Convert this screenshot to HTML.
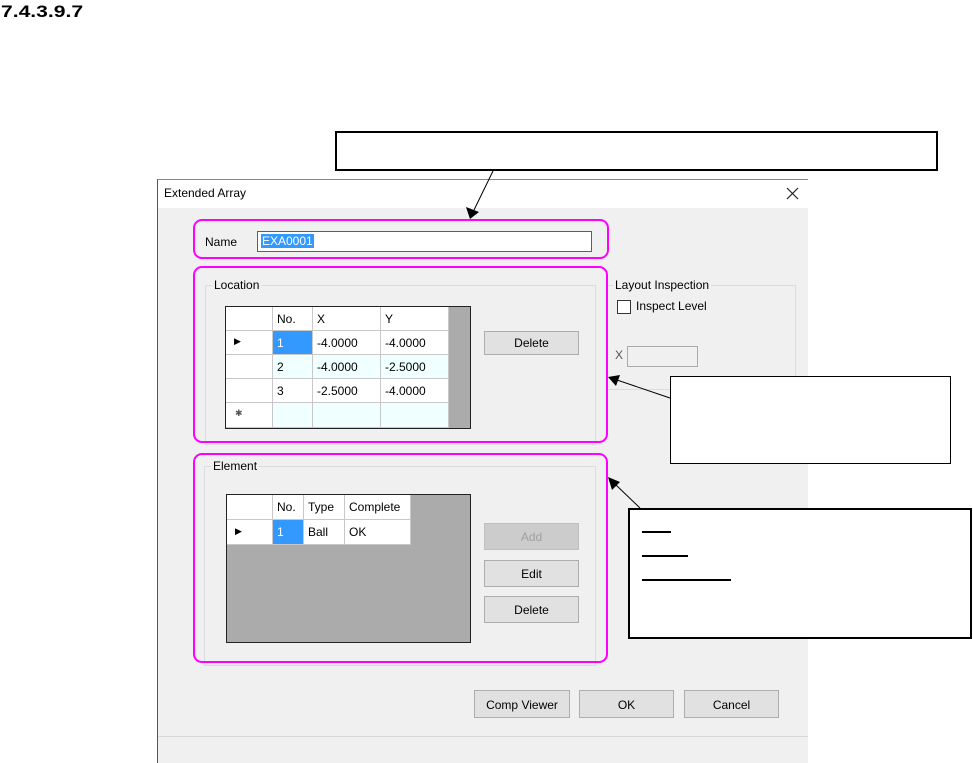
<!DOCTYPE html>
<html><head><meta charset="utf-8"><style>
*{box-sizing:border-box;margin:0;padding:0}
body{width:973px;height:763px;background:#fff;position:relative;overflow:hidden;font-family:"Liberation Sans",sans-serif;font-size:12px;color:#000}
.a{position:absolute}
.btn{position:absolute;background:#e1e1e1;border:1px solid #adadad;text-align:center;font-size:12px}
.grp{position:absolute;border:1px solid #dcdcdc}
.lg{position:absolute;background:#f0f0f0;padding:0 2px;font-size:12px;top:-8px;left:6px}
.mag{position:absolute;border:2px solid #ff00ff;border-radius:9px}
.cell{position:absolute;border-right:1px solid #c8c8c8;border-bottom:1px solid #c8c8c8;background:#fff;padding-left:4px;font-size:12px}
.cb{position:absolute;border:2px solid #000;background:#fff}
</style></head><body>
<div class="a" style="left:1px;top:3px;font-weight:bold;font-size:17px;line-height:17px;transform:scaleX(1.24);transform-origin:0 0">7.4.3.9.7</div>

<!-- dialog -->
<div class="a" style="left:157px;top:179px;width:651px;height:584px;background:#f0f0f0;border-left:1px solid #555;border-top:1px solid #888"></div>
<div class="a" style="left:158px;top:180px;width:650px;height:28px;background:#fff"></div>
<div class="a" style="left:164px;top:186px;font-size:12px">Extended Array</div>
<svg class="a" style="left:786px;top:187px" width="13" height="13"><path d="M1 1L12 12M12 1L1 12" stroke="#222" stroke-width="1.2"/></svg>

<div class="a" style="left:205px;top:235px">Name</div>
<div class="a" style="left:257px;top:231px;width:335px;height:21px;border:1px solid #0078d7;background:#fff"></div>
<div class="a" style="left:261px;top:234px;background:#3399ff;color:#fff;padding:0 1px">EXA0001</div>

<!-- location group -->
<div class="grp" style="left:205px;top:285px;width:391px;height:160px"><span class="lg">Location</span></div>
<div class="a" style="left:225px;top:306px;width:246px;height:123px;background:#ababab;border:1px solid #222"></div>
<div class="cell" style="left:226px;top:307px;width:47px;height:24px"></div>
<div class="cell" style="left:273px;top:307px;width:40px;height:24px;padding-top:5px">No.</div>
<div class="cell" style="left:313px;top:307px;width:68px;height:24px;padding-top:5px">X</div>
<div class="cell" style="left:381px;top:307px;width:68px;height:24px;padding-top:5px">Y</div>
<div class="cell" style="left:226px;top:331px;width:47px;height:24px;padding:5px 0 0 8px;font-size:9px">▶</div>
<div class="cell" style="left:273px;top:331px;width:40px;height:24px;padding-top:5px;background:#3399ff;color:#fff">1</div>
<div class="cell" style="left:313px;top:331px;width:68px;height:24px;padding-top:5px">-4.0000</div>
<div class="cell" style="left:381px;top:331px;width:68px;height:24px;padding-top:5px">-4.0000</div>
<div class="cell" style="left:226px;top:355px;width:47px;height:24px"></div>
<div class="cell" style="left:273px;top:355px;width:40px;height:24px;padding-top:5px;background:#f0ffff">2</div>
<div class="cell" style="left:313px;top:355px;width:68px;height:24px;padding-top:5px;background:#f0ffff">-4.0000</div>
<div class="cell" style="left:381px;top:355px;width:68px;height:24px;padding-top:5px;background:#f0ffff">-2.5000</div>
<div class="cell" style="left:226px;top:379px;width:47px;height:24px"></div>
<div class="cell" style="left:273px;top:379px;width:40px;height:24px;padding-top:5px">3</div>
<div class="cell" style="left:313px;top:379px;width:68px;height:24px;padding-top:5px">-2.5000</div>
<div class="cell" style="left:381px;top:379px;width:68px;height:24px;padding-top:5px">-4.0000</div>
<div class="cell" style="left:226px;top:403px;width:47px;height:25px;padding:5px 0 0 9px;font-size:9px;color:#555">✱</div>
<div class="cell" style="left:273px;top:403px;width:40px;height:25px;background:#f0ffff"></div>
<div class="cell" style="left:313px;top:403px;width:68px;height:25px;background:#f0ffff"></div>
<div class="cell" style="left:381px;top:403px;width:68px;height:25px;background:#f0ffff"></div>
<div class="btn" style="left:484px;top:331px;width:95px;height:24px;padding-top:4px">Delete</div>

<!-- layout inspection -->
<div class="grp" style="left:607px;top:285px;width:189px;height:105px;border-left:none"><span class="lg" style="left:6px">Layout Inspection</span></div>
<div class="a" style="left:617px;top:300px;width:14px;height:14px;border:1px solid #333;background:#fff"></div>
<div class="a" style="left:636px;top:299px">Inspect Level</div>
<div class="a" style="left:615px;top:348px;color:#555">X</div>
<div class="a" style="left:627px;top:346px;width:71px;height:21px;border:1px solid #aaa;background:#f0f0f0"></div>

<!-- element group -->
<div class="grp" style="left:204px;top:466px;width:392px;height:200px"><span class="lg">Element</span></div>
<div class="a" style="left:226px;top:494px;width:245px;height:149px;background:#ababab;border:1px solid #222"></div>
<div class="cell" style="left:227px;top:495px;width:46px;height:25px"></div>
<div class="cell" style="left:273px;top:495px;width:31px;height:25px;padding-top:5px">No.</div>
<div class="cell" style="left:304px;top:495px;width:41px;height:25px;padding-top:5px">Type</div>
<div class="cell" style="left:345px;top:495px;width:66px;height:25px;padding-top:5px">Complete</div>
<div class="cell" style="left:227px;top:520px;width:46px;height:25px;padding:6px 0 0 8px;font-size:9px">▶</div>
<div class="cell" style="left:273px;top:520px;width:31px;height:25px;padding-top:5px;background:#3399ff;color:#fff">1</div>
<div class="cell" style="left:304px;top:520px;width:41px;height:25px;padding-top:5px">Ball</div>
<div class="cell" style="left:345px;top:520px;width:66px;height:25px;padding-top:5px">OK</div>
<div class="btn" style="left:484px;top:523px;width:95px;height:27px;padding-top:6px;background:#ccc;border-color:#bfbfbf;color:#a0a0a0">Add</div>
<div class="btn" style="left:484px;top:560px;width:95px;height:27px;padding-top:6px">Edit</div>
<div class="btn" style="left:484px;top:596px;width:95px;height:27px;padding-top:6px">Delete</div>

<div class="btn" style="left:474px;top:690px;width:96px;height:28px;padding-top:7px">Comp Viewer</div>
<div class="btn" style="left:579px;top:690px;width:95px;height:28px;padding-top:7px">OK</div>
<div class="btn" style="left:684px;top:690px;width:95px;height:28px;padding-top:7px">Cancel</div>
<div class="a" style="left:158px;top:736px;width:650px;height:1px;background:#d8d8d8"></div>

<!-- magenta highlights -->
<div class="mag" style="left:193px;top:219px;width:416px;height:40px"></div>
<div class="mag" style="left:193px;top:266px;width:415px;height:177px"></div>
<div class="mag" style="left:193px;top:453px;width:415px;height:210px"></div>

<!-- callouts -->
<div class="cb" style="left:335px;top:131px;width:603px;height:40px"></div>
<div class="cb" style="left:670px;top:376px;width:281px;height:88px;border-width:1px"></div>
<div class="cb" style="left:628px;top:508px;width:344px;height:131px"></div>
<div class="a" style="left:642px;top:531px;width:29px;height:2px;background:#000"></div>
<div class="a" style="left:642px;top:555px;width:46px;height:2px;background:#000"></div>
<div class="a" style="left:642px;top:579px;width:89px;height:2px;background:#000"></div>
<svg class="a" style="left:0;top:0" width="973" height="763">
<line x1="493" y1="171" x2="474" y2="210" stroke="#000" stroke-width="1"/>
<polygon points="470,219 466,207 479,212" fill="#000"/>
<line x1="670" y1="398" x2="617" y2="380" stroke="#000" stroke-width="1"/>
<polygon points="608,377 620,375 616,386" fill="#000"/>
<line x1="640" y1="508" x2="616" y2="485" stroke="#000" stroke-width="1"/>
<polygon points="608,477 620,482 612,490" fill="#000"/>
</svg>
</body></html>
